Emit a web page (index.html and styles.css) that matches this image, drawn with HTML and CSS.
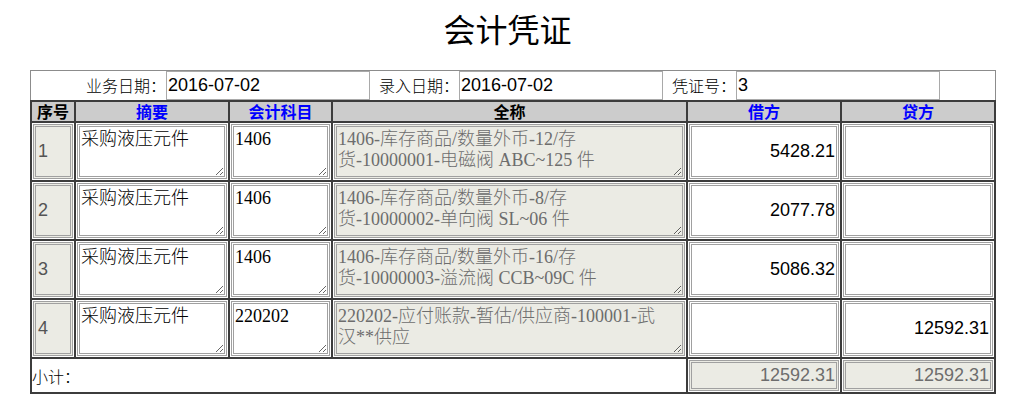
FILE: index.html
```html
<!DOCTYPE html>
<html lang="zh">
<head>
<meta charset="utf-8">
<title>会计凭证</title>
<link rel="stylesheet" href="styles.css">
</head>
<body>
<h1 class="title">会计凭证</h1>
<div class="voucher">
  <div class="meta">
    <label class="meta-label">业务日期：</label><input class="meta-input" type="text" value="2016-07-02">
    <label class="meta-label gap">录入日期：</label><input class="meta-input" type="text" value="2016-07-02">
    <label class="meta-label gap">凭证号：</label><input class="meta-input" type="text" value="3">
  </div>
  <table class="grid">
    <thead>
      <tr>
        <th class="c-no">序号</th>
        <th class="c-memo blue">摘要</th>
        <th class="c-code blue">会计科目</th>
        <th class="c-name">全称</th>
        <th class="c-amt blue">借方</th>
        <th class="c-amt2 blue">贷方</th>
      </tr>
    </thead>
    <tbody>
      <tr>
        <td><input class="no-input" type="text" value="1" disabled></td>
        <td><textarea class="ta">采购液压元件</textarea></td>
        <td><textarea class="ta">1406</textarea></td>
        <td><textarea class="ta ta-ro" readonly>1406-库存商品/数量外币-12/存
货-10000001-电磁阀 ABC~125 件</textarea></td>
        <td><input class="amt-input" type="text" value="5428.21"></td>
        <td><input class="amt-input" type="text" value=""></td>
      </tr>
      <tr>
        <td><input class="no-input" type="text" value="2" disabled></td>
        <td><textarea class="ta">采购液压元件</textarea></td>
        <td><textarea class="ta">1406</textarea></td>
        <td><textarea class="ta ta-ro" readonly>1406-库存商品/数量外币-8/存
货-10000002-单向阀 SL~06 件</textarea></td>
        <td><input class="amt-input" type="text" value="2077.78"></td>
        <td><input class="amt-input" type="text" value=""></td>
      </tr>
      <tr>
        <td><input class="no-input" type="text" value="3" disabled></td>
        <td><textarea class="ta">采购液压元件</textarea></td>
        <td><textarea class="ta">1406</textarea></td>
        <td><textarea class="ta ta-ro" readonly>1406-库存商品/数量外币-16/存
货-10000003-溢流阀 CCB~09C 件</textarea></td>
        <td><input class="amt-input" type="text" value="5086.32"></td>
        <td><input class="amt-input" type="text" value=""></td>
      </tr>
      <tr>
        <td><input class="no-input" type="text" value="4" disabled></td>
        <td><textarea class="ta">采购液压元件</textarea></td>
        <td><textarea class="ta">220202</textarea></td>
        <td><textarea class="ta ta-ro" readonly>220202-应付账款-暂估/供应商-100001-武
汉**供应</textarea></td>
        <td><input class="amt-input" type="text" value=""></td>
        <td><input class="amt-input" type="text" value="12592.31"></td>
      </tr>
    </tbody>
    <tfoot>
      <tr>
        <td class="sum-label" colspan="4">小计：</td>
        <td><input class="sum-input" type="text" value="12592.31" disabled></td>
        <td><input class="sum-input" type="text" value="12592.31" disabled></td>
      </tr>
    </tfoot>
  </table>
</div>
</body>
</html>
```
FILE: styles.css
```css
html, body {
  margin: 0;
  padding: 0;
  background: #ffffff;
}

body {
  font-family: "Noto Sans CJK SC", "Liberation Sans", sans-serif;
  color: #000;
}

.title {
  margin: 0;
  height: 70px;
  line-height: 56px;
  font-size: 32px;
  font-weight: normal;
  text-align: center;
}

.voucher {
  margin-left: 30px;
  width: 966px;
}

.meta {
  box-sizing: border-box;
  height: 30px;
  border: 1px solid #8c8c8c;
  border-bottom: none;
  display: flex;
  justify-content: center;
  align-items: flex-start;
}

.meta-label {
  font-size: 16px;
  font-weight: 300;
  line-height: 29px;
  height: 29px;
}

.meta-label.gap {
  margin-left: 9px;
}

.meta-input {
  box-sizing: border-box;
  width: 204px;
  height: 29px;
  margin: 0;
  padding: 0 1px;
  border: 1px solid #a9a9a9;
  font-family: "Liberation Sans", sans-serif;
  font-size: 18px;
  color: #000;
  background: #fff;
  outline: none;
}

.grid {
  width: 966px;
  table-layout: fixed;
  border-collapse: separate;
  border-spacing: 0;
  border: 1px solid #3c3c3c;
}

.grid th,
.grid td {
  box-sizing: border-box;
  border: 1px solid #3c3c3c;
  padding: 1px;
}

.grid th {
  background: #cccccc;
  font-size: 16px;
  font-weight: bold;
  line-height: 17px;
  height: 21px;
  padding: 0;
  text-align: center;
}

.grid th.blue {
  color: #0000ff;
}

.c-no { width: 44px; }
.c-memo { width: 154px; }
.c-code { width: 103px; }
.c-name { width: 355px; }
.c-amt { width: 154px; }
.c-amt2 { width: 154px; }

.grid tbody td {
  height: 59px;
}

.no-input,
.amt-input,
.sum-input,
.ta {
  display: block;
  box-sizing: border-box;
  width: 100%;
  margin: 0;
  border: 3px double #a0a0a0;
  outline: none;
}

.no-input {
  height: 55px;
  padding: 0 2px;
  background: #ebebe4;
  color: #545454;
  font-family: "Liberation Sans", sans-serif;
  font-size: 18px;
}

.amt-input {
  height: 55px;
  padding: 0 1px;
  background: #fff;
  color: #000;
  text-align: right;
  font-family: "Liberation Sans", sans-serif;
  font-size: 18px;
}

.ta {
  height: 55px;
  padding: 2px 1px;
  resize: both;
  overflow: hidden;
  background: #fff;
  color: #000;
  font-family: "Liberation Serif", "Noto Sans CJK SC", serif;
  font-size: 18px;
  font-weight: 300;
  line-height: 21px;
}

.ta-ro {
  background: #ebebe4;
  color: #6d6d6d;
}

.grid tfoot td {
  height: 35px;
}

.sum-label {
  font-size: 16px;
  font-weight: 300;
  text-align: left;
  vertical-align: middle;
}

.grid tfoot .sum-label {
  padding: 0;
}

.sum-input {
  height: 31px;
  padding: 0 1px;
  background: #ebebe4;
  color: #6d6d6d;
  text-align: right;
  font-family: "Liberation Sans", sans-serif;
  font-size: 18px;
}
```
